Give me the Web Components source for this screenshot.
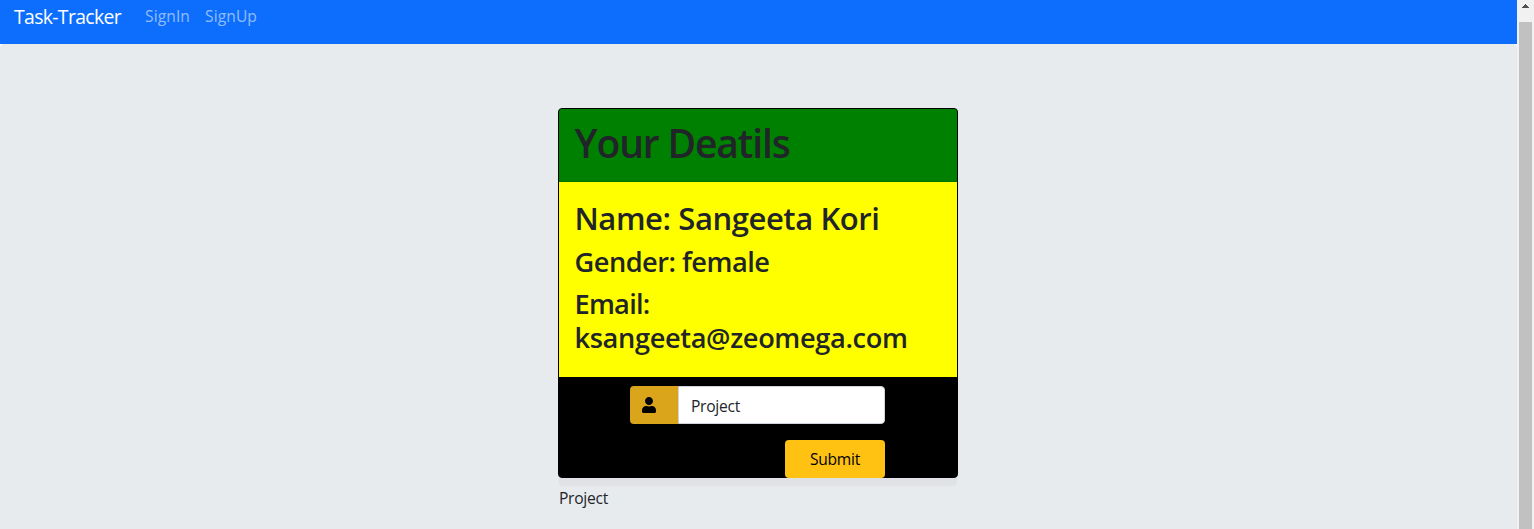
<!DOCTYPE html>
<html lang="en"><head><meta charset="utf-8"><title>Task-Tracker</title>
<style>
html,body{margin:0;height:100%;overflow:hidden;background:#fff}
body{font:400 15.6px/24px "Open Sans","Noto Sans",sans-serif;color:#212529}
</style></head><body>
<task-app></task-app>
<script>
const define = (name, html, ready) => customElements.define(name, class extends HTMLElement {
  connectedCallback() {
    if (this.shadowRoot) return;
    this.attachShadow({mode: 'open'}).innerHTML = html;
    if (ready) ready(this);
  }
});

// One line of text, tracked so that it fills the width it is given.
define('fit-text', `<style>:host{display:block;white-space:nowrap}span{display:inline-block}</style><span><slot></slot></span>`, el => {
  const span = el.shadowRoot.querySelector('span');
  const gap = (Number(el.getAttribute('width')) - span.getBoundingClientRect().width) / el.textContent.length;
  span.style.letterSpacing = gap.toFixed(3) + 'px';
});

define('nav-bar', `<style>
:host{display:flex;height:44px;background:#0d6efd;box-sizing:border-box;padding:1px 0 0 14px;align-items:flex-start}
.brand{color:#fff;font-size:19.4px;line-height:32px;width:108px;margin-right:23px}
.link{color:rgba(255,255,255,.55);line-height:30px;width:45px;margin-right:15px}
</style><fit-text class="brand" width="107">Task-Tracker</fit-text><fit-text class="link" width="45">SignIn</fit-text><fit-text class="link" width="52">SignUp</fit-text>`);

define('user-icon', `<style>:host{display:block;width:14px;height:16px}svg{display:block}</style>
<svg width="14" height="16" viewBox="0 0 448 512"><path fill="#000" d="M224 256c70.7 0 128-57.3 128-128S294.700 0 224 0 96 57.300 96 128s57.300 128 128 128zm89.600 32h-16.700c-22.200 10.200-46.900 16-72.900 16s-50.600-5.800-72.900-16h-16.700C60.200 288 0 348.200 0 422.400V464c0 26.500 21.500 48 48 48h352c26.500 0 48-21.500 48-48v-41.600c0-74.200-60.200-134.400-134.400-134.400z"/></svg>`);

define('project-form', `<style>
:host{display:flex;flex-direction:column;align-items:flex-end;padding:9px 72px 0 71px}
.group{display:flex;align-self:stretch;height:38px}
.tag{width:48px;box-sizing:border-box;background:#daa51b;border-radius:4px 0 0 4px;padding:11px 12px}
.field{flex:1;box-sizing:border-box;background:#fff;border:1px solid #ced4da;border-radius:0 4px 4px 0;padding:7px 12px}
.btn{margin-top:16px;width:100px;height:38px;box-sizing:border-box;border:0;border-radius:4px;background:#ffc213;color:#000;padding:7px 25px}
</style><div class="group"><div class="tag"><user-icon></user-icon></div><div class="field"><fit-text width="49">Project</fit-text></div></div>
<div class="btn" role="button"><fit-text width="50">Submit</fit-text></div>`);

define('details-card', `<style>
:host{display:block;width:400px;box-sizing:border-box;border:1px solid #000;border-radius:4px;background:#000;height:370px}
header{background:#008000;padding:8px 15.500px;box-sizing:border-box;border-bottom:1px solid #007200;height:73px;border-radius:3px 3px 0 0}
h1,h2,h3{margin:0 0 8px;font-weight:560;line-height:1.2}
h1{font-size:39px;line-height:52px}h2{font-size:31px;line-height:40px;height:38.4px}h3{font-size:27.2px;line-height:33.600px}
h3:first-of-type{margin-top:9px}
section{background:#ff0;padding:16px 15.500px;height:195px;box-sizing:border-box}
</style><header><h1><fit-text width="215">Your Deatils</fit-text></h1></header>
<section><h2><fit-text width="305">Name: Sangeeta Kori</fit-text></h2><h3><fit-text width="195">Gender: female</fit-text></h3>
<h3><fit-text width="75">Email:</fit-text><fit-text width="333">ksangeeta@zeomega.com</fit-text></h3></section><project-form></project-form>`);

define('scroll-bar', `<style>:host{display:flex;flex-direction:column;align-items:center;width:17px;background:#f1f1f1}
svg{display:block;height:22px;width:17px;flex:none}i{width:13px;flex:1;background:#c1c1c1}</style>
<svg viewBox="0 0 17 22" shape-rendering="crispEdges"><path fill="#505050" d="M8 4h1v1h1v1h1v1h1v1H5V7h1V6h1V5h1z"/></svg><i></i>`);

define('task-app', `<style>
:host{display:flex;height:529px}
.page{flex:1;display:flex;flex-direction:column}
main{flex:1;background:#e8ebee;border-radius:4px 4px 0 0;display:flex;flex-direction:column;align-items:center;padding-top:64px}
.column{width:400px;margin-right:1px}
.foot{height:8px;margin:0 1px;background:#e0e2e5;border-radius:0 0 3px 3px}
.project{padding-left:1px}
</style><div class="page"><nav-bar></nav-bar><main><div class="column"><details-card></details-card><div class="foot"></div><div class="project"><fit-text width="49">Project</fit-text></div></div></main></div><scroll-bar></scroll-bar>`);
</script></body></html>
